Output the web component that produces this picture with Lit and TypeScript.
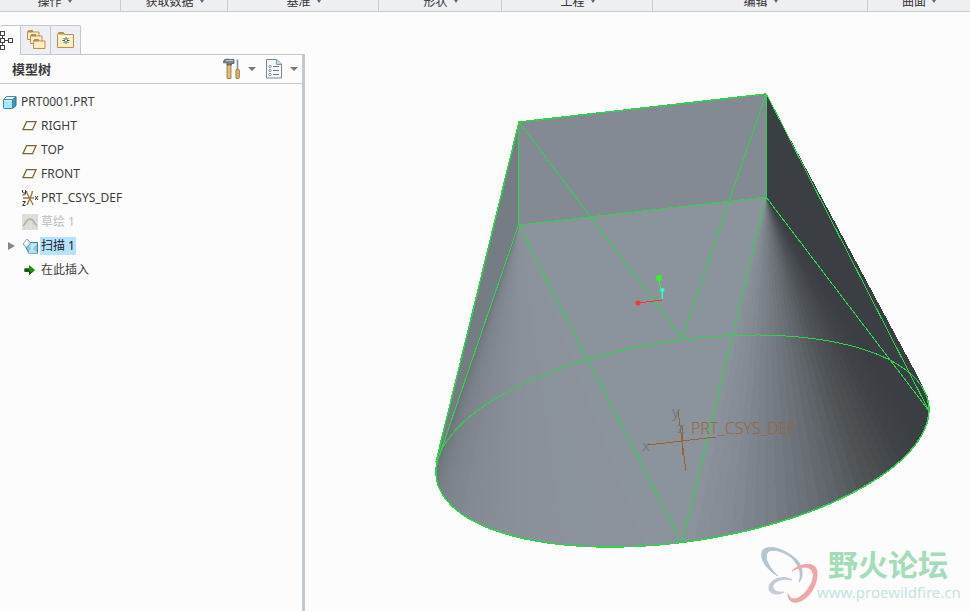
import { LitElement, html, svg, css } from "lit";
import { customElement } from "lit/decorators.js";

const UI = css`"Noto Sans", "Noto Sans CJK SC", sans-serif`;

/* ---------- icons ---------- */
const folder = (x: number, y: number) => svg`
  <path d="M${x + 0.5} ${y + 9.5}v-8l1-1h4l1 1.500h5.500v7.500z" fill="#ffecc0" stroke="#b8934f"/>
  <path d="M${x + 1} ${y + 1.5}h5" stroke="#b38a48" stroke-width="2"/>`;

const icons: Record<string, unknown> = {
  part: svg`<path d="M10.500 5.500l3.500-3v9l-3.500 3z" fill="#3f9cc0" stroke="#27647e"/>
    <path d="M1.500 5.500l3-3h9.500l-3.500 3z" fill="#e0f8ff" stroke="#4c8ba5"/>
    <rect x="1.500" y="5.500" width="9" height="9" rx="1" fill="#a6e8fb" stroke="#3687a4"/>
    <path d="M2.500 6.500h7" stroke="#d7f7ff"/>`,
  plane: svg`<path d="M4.500 3.700h9.500l-3.500 8h-9.500z" fill="none" stroke="#7b6332" stroke-width="1.300"/>`,
  csys: svg`<path d="M1 8h11M4.500 1c.5 4 5 9.500 6.500 14M10.500 1c-.5 4-3.500 9-5.500 14" fill="none" stroke="#967a45" stroke-width="1.400"/>
    <path d="M.5 0v2l1 1h1.500M3.500 0v4l-1 1H.500M.5 11.500h3L.5 15.500h3M13 6l3 4M16 6l-3 4" fill="none" stroke="#333"/>`,
  sketch: svg`<rect width="16" height="16" fill="#dededd"/>
    <path d="M2 2h1M6 2h1M10 2h1M14 2h1M2 6h1M14 6h1M6 10h1M10 10h1M2 14h1M6 14h1M10 14h1M14 14h1" stroke="#c4c4c2"/>
    <path d="M1 12c3-2 3-7 7-7s4 5 7 7" fill="none" stroke="#b8b8a7" stroke-width="2"/>`,
  sweep: svg`<path d="M4 9.500L8 4.500h7.500v11H7z" fill="#86c8df" stroke="#3f849f"/>
    <path d="M8 5l7 .5-5 5z" fill="#c3e8f3"/><path d="M10 10.500l5 5H7z" fill="#b3e0ef"/>
    <path d="M15 5l-5 5.500 5 5M10 10.500l-3 4.500M10 10.500L6 6" fill="none" stroke="#e9f8fc" stroke-width=".8"/>
    <path d="M1 6l4-5 4 4-4.500 5z" fill="#c0e2ed" stroke="#6f93a2" stroke-width=".8"/>
    <path d="M2 5.500L5 2l1 4-2 2z" fill="#fff"/>`,
  insert: svg`<path d="M2.500 6.500H7V3l6 5-6 5V9.500H2.500z" fill="#0a9a0a"/>
    <path d="M2.500 9H8v2l5-2.800L7 13V9.800H2.500z" fill="#21420c"/>
    <path d="M2.500 6.500h4.500v3H2.500z" fill="#204f0c"/>`,
};

const icon = (name: string) =>
  html`<svg class="ico" width="17" height="16" viewBox="0 0 17 16" aria-hidden="true">${icons[name]}</svg>`;

/* ---------- ribbon ---------- */
const groups: [string, number][] = [
  ["操作", 121], ["获取数据", 107], ["基准", 151], ["形状", 123],
  ["工程", 151], ["编辑", 215], ["曲面", 102],
];

@customElement("ribbon-labels")
export class RibbonLabels extends LitElement {
  static styles = css`
    :host { display: flex; height: 11px; overflow: hidden; background: #eeeff2; border-bottom: 1px solid #c9cacc; }
    .group { flex-basis: 0; min-width: 0; display: flex; justify-content: center; align-items: flex-end; box-shadow: inset -1px 0 #c9cccf; }
    .group:last-child { box-shadow: none; }
    .group:first-child button { margin-right: 12px; }
    button { display: flex; align-items: center; gap: 6px; padding: 0; margin: 0 0 2px; border: 0; background: none; color: #333; font: 12px/16px "Noto Sans CJK SC", sans-serif; white-space: nowrap; }
    .caret { border: 2px solid transparent; border-top: 3px solid #666; border-bottom: 0; }
  `;
  render() {
    return groups.map(([name, w]) => html`<div class="group" style="flex-grow:${w}">
      <button>${name}<span class="caret"></span></button></div>`);
  }
}

/* ---------- model tree ---------- */
type Row = { text: string; icon: string; kind?: string; expand?: boolean };
const rows: Row[] = [
  { text: "RIGHT", icon: "plane" },
  { text: "TOP", icon: "plane" },
  { text: "FRONT", icon: "plane" },
  { text: "PRT_CSYS_DEF", icon: "csys" },
  { text: "草绘 1", icon: "sketch", kind: "hidden" },
  { text: "扫描 1", icon: "sweep", kind: "selected", expand: true },
  { text: "在此插入", icon: "insert" },
];

@customElement("model-tree")
export class ModelTree extends LitElement {
  static styles = css`
    :host { display: flex; flex-direction: column; font: 12px/18px ${UI}; color: #3c3c3c; }
    button { padding: 0; margin: 0; border: 0; background: none; display: flex; align-items: center; justify-content: center; }
    svg { display: block; flex: none; }
    .tabs { display: flex; height: 29px; padding-top: 13px; }
    .tab { width: 31px; margin-right: -1px; box-sizing: border-box; border: 1px solid #c3c7cc; border-bottom: 0; border-radius: 2px 2px 0 0; background: #eeeff2; }
    .tab.current { width: 21px; border-left: 0; background: #fcfcfc; justify-content: flex-start; position: relative; z-index: 1; margin-bottom: -1px; }
    .panel { flex: 1; border-top: 1px solid #c3c7cc; border-right: 3px solid #c3c8ce; }
    .head { display: flex; align-items: center; height: 28px; padding: 0 4px 0 12px; border-bottom: 1px solid #c3c7cc; }
    h2 { flex: 1; margin: 0; font: bold 13px/18px "Noto Sans CJK SC", sans-serif; color: #3c3c3c; }
    .drop { width: 8px; height: 20px; }
    .drop::before { content: ""; border: 4px solid transparent; border-top-color: #777; border-bottom: 0; }
    .tool { width: 20px; height: 24px; }
    .tool + .drop { margin: 0 8px 0 6px; }
    .tool + .drop:last-child { margin-right: 0; }
    ul { list-style: none; margin: 0; padding: 0; }
    .tree { padding: 6px 0 0 2px; }
    .row { display: flex; align-items: center; height: 24px; gap: 1px; }
    .root { gap: 0; }
    .root .name { padding-left: 2px; }
    .toggle { width: 19px; height: 16px; }
    .toggle::before { content: ""; }
    .open::before { border: 4px solid transparent; border-left: 7px solid #858585; border-right: 0; }
    .name { padding: 0 1px; }
    .hidden .name { color: #bdbdbd; }
    .selected .name { background: #b3e3ff; color: #222; }
  `;
  render() {
    return html`
      <div class="tabs" role="tablist">
        <button class="tab current" role="tab" aria-selected="true" aria-label="Model tree">
          <svg width="14" height="22" viewBox="0 0 14 22"><g fill="#fff" stroke="#444">
            <path d="M0 10.500h8M2.500 5v12" fill="none"/>
            <rect x=".5" y="1.500" width="4" height="4"/><rect x=".5" y="8.500" width="4" height="4"/><rect x=".5" y="15.500" width="4" height="4"/><rect x="8.500" y="8.500" width="4" height="4"/></g></svg>
        </button>
        <button class="tab" role="tab" aria-label="Folders">
          <svg width="20" height="20" viewBox="0 0 20 20">${folder(1, 0)}${folder(4, 4)}${folder(7, 9)}</svg>
        </button>
        <button class="tab" role="tab" aria-label="Favorites">
          <svg width="18" height="18" viewBox="0 0 18 18"><path d="M.5 16.500v-13l1-2h5l1 2h9v13z" fill="#ffeec3" stroke="#bb9049"/>
            <path d="M1.500 3.500v-2h5l1 2z" fill="#b98e49"/><path d="M2 5.500h14" stroke="#fffbe7"/>
            <path d="M9 6v7M5.500 9.500h7M6.500 7l5 5M11.500 7l-5 5" stroke="#1f657d"/><circle cx="9" cy="9.500" r="1" fill="#fff"/></svg>
        </button>
      </div>
      <div class="panel">
        <div class="head">
          <h2>模型树</h2>
          <button class="tool" aria-label="Settings">
            <svg width="18" height="22" viewBox="0 0 18 22"><path d="M4 5h4v15.500H4z" fill="#e5bb74" stroke="#966c30" stroke-width=".8"/>
              <path d="M1 2C3 .800 5 1 7.500 1.500h3.500v4H8.500V7H4V4.500L.5 5z" fill="#777f89" stroke="#555d67" stroke-width=".8"/>
              <path d="M3 2.700h7" stroke="#cdd3da"/><path d="M14.500 1.500V12" stroke="#848c96" stroke-width="1.600"/>
              <rect x="12.900" y="11.500" width="3.500" height="9" rx="1" fill="#dfb069" stroke="#966c30" stroke-width=".8"/></svg>
          </button>
          <button class="drop" aria-label="Settings menu"></button>
          <button class="tool" aria-label="Show">
            <svg width="18" height="22" viewBox="0 0 18 22"><path d="M1.500 1.500H12l4.500 4.500v14h-15z" fill="#f5f8fa" stroke="#7d868c"/>
              <path d="M11.500 1.500v5h5" fill="#c8dce6" stroke="#7d9aa8"/><path d="M8 8.500h6M8 12.500h6M8 16.500h6" stroke="#777"/>
              <g fill="#fff" stroke="#777" stroke-width=".8"><circle cx="5" cy="8.500" r="1.200"/><circle cx="5" cy="12.500" r="1.200"/><circle cx="5" cy="16.500" r="1.200"/></g></svg>
          </button>
          <button class="drop" aria-label="Show menu"></button>
        </div>
        <ul class="tree" role="tree">
          <li role="treeitem" aria-expanded="true">
            <div class="row root">${icon("part")}<span class="name">PRT0001.PRT</span></div>
            <ul role="group">${rows.map((r) => html`
              <li class=${r.kind ?? ""} role="treeitem"><div class="row">
                ${r.expand ? html`<button class="toggle open" aria-label="Expand"></button>` : html`<span class="toggle"></span>`}
                ${icon(r.icon)}<span class="name">${r.text}</span></div></li>`)}</ul>
          </li>
        </ul>
      </div>`;
  }
}

/* ---------- 3D model ---------- */
const PHI = -0.298;
const rim = (t: number): [number, number] => [682.5 + 246.5 * Math.cos(t), 441 + 106 * Math.sin(t + PHI)];
const pts = (list: [number, number][]) => list.map(([x, y]) => `${x.toFixed(1)},${y.toFixed(1)}`).join(" ");
const arc = (a: number, b: number, n = 60) =>
  Array.from({ length: n + 1 }, (_, i) => rim(a + ((b - a) * i) / n));

type Stop = [number, number, number, number];
function shade(stops: Stop[], k: number) {
  let i = 1;
  while (i < stops.length - 1 && stops[i][0] < k) i++;
  const a = stops[i - 1], b = stops[i];
  const f = (k - a[0]) / (b[0] - a[0]);
  return `rgb(${[1, 2, 3].map((c) => Math.round(a[c] + (b[c] - a[c]) * f)).join(",")})`;
}
function fan(apex: [number, number], from: number, to: number, n: number, stops: Stop[]) {
  return Array.from({ length: n }, (_, i) => {
    const a = from + ((to - from) * i) / n;
    const b = from + ((to - from) * Math.min(n, i + 1.3)) / n;
    return svg`<polygon points=${pts([apex, rim(a), rim((a + b) / 2), rim(b)])} fill=${shade(stops, (i + 0.5) / n)}/>`;
  });
}
const rightStops: Stop[] = [
  [0, 139, 147, 156], [0.12, 131, 138, 147], [0.27, 115, 122, 129], [0.38, 101, 107, 113],
  [0.53, 80, 84, 87], [0.7, 63, 66, 70], [0.82, 59, 62, 66], [1, 59, 62, 66],
];
const leftStops: Stop[] = [
  [0, 139, 147, 156], [0.4, 138, 145, 155], [0.65, 131, 138, 147], [0.85, 121, 128, 136], [1, 108, 115, 122],
];

@customElement("model-view")
export class ModelView extends LitElement {
  static styles = css`
    :host { display: block; min-width: 0; }
    svg { display: block; width: 100%; height: 100%; }
    .label { font: 300 16px "Open Sans", sans-serif; fill: #9a6330; }
    .axis { font: 15px "Open Sans", sans-serif; fill: #747880; }
    .brand { font: bold 30px "Noto Sans CJK SC", sans-serif; fill: #a3dcb8; }
    .site { font: 15px "Noto Sans", sans-serif; fill: #c3e3df; }
  `;
  render() {
    const H = Math.PI / 2;
    return html`<svg viewBox="305 12 665 599" role="img" aria-label="PRT0001">
      <g shape-rendering="crispEdges">
        <polygon points="519,122 436,462 440,475 470,430 519,225" fill="#757c84"/>
        <polygon points="766,94 917,375 928,397 929,411 766,197" fill="#3b3e42"/>
        ${fan([519, 225], H, Math.PI + 0.04, 32, leftStops)}
        ${fan([766, 197], H, 0, 32, rightStops)}
        <polygon points="519,122 766,94 766,197 519,225" fill="#838a94"/>
        <polygon points="519,225 766,197 682,543" fill="#8b939c"/>
        <g fill="none" stroke="#2fd24b">
          <polyline points=${pts(arc(-0.22, Math.PI + 0.1))} stroke-width="1.500"/>
          <polyline points=${pts(arc(Math.PI, 2 * Math.PI))}/>
          <path d="M436 462L519 122L766 94" stroke-width="1.500"/>
          <path d="M518.500 122v103L766.500 197V94L929 411L766 197L682 543L518.500 225L436 465M519 122L682 338L766 94"/>
        </g>
        <path d="M648 445L716 437M678 410l8 61" stroke="#9a6330" fill="none"/>
        <path d="M682.500 425v30" stroke="#9a6330" stroke-width="1.500"/>
        <path d="M638 303L662 300" stroke="#ff3434"/>
        <path d="M659 278L662 299" stroke="#35f52f"/>
        <path d="M662.500 290v9" stroke="#35efff"/>
      </g>
      <circle cx="638" cy="303" r="2.500" fill="#ff3434"/>
      <circle cx="659" cy="278" r="3" fill="#35f52f"/>
      <circle cx="662.500" cy="290" r="2" fill="#35efff"/>
      <text class="axis" x="672" y="417">y</text>
      <text class="axis" x="677" y="433">z</text>
      <text class="axis" x="642" y="451">x</text>
      <text class="label" x="691" y="434">PRT_CSYS_DEF</text>
      <g stroke-width="1" stroke-linejoin="round">
      <path fill="#b5c4d1" stroke="#b5c4d1" d="M778 576C764 568 759 556 763 550C771 543 789 552 797 560C804 568 803 578 799 582C803 572 797 563 791 557C781 550 770 548 767 553C764 559 770 569 778 576z"/>
      <path fill="#c3cbd4" stroke="#c3cbd4" d="M792 580C785 575 770 578 769 587C768 594 777 596 784 592C777 593 772 590 773 585C776 580 785 578 792 580z"/>
      <path fill="#f0a5a8" stroke="#f0a5a8" d="M792 571C800 563 816 561 817 572C818 584 809 600 797 602C791 603 788 599 788 594C790 600 795 600 800 597C808 592 815 579 813 573C811 565 800 566 792 571z"/>
      </g>
      <text class="brand" x="828" y="576">野火论坛</text>
      <text class="site" x="817" y="598">www.proewildfire.cn</text>
    </svg>`;
  }
}

@customElement("app-root")
export class AppRoot extends LitElement {
  static styles = css`
    :host { display: flex; flex-direction: column; height: 100vh; background: #fcfcfc; }
    main { flex: 1; min-height: 0; display: flex; }
    model-tree { flex: none; width: 305px; }
    model-view { flex: 1; }
  `;
  render() {
    return html`<ribbon-labels></ribbon-labels><main><model-tree></model-tree><model-view></model-view></main>`;
  }
}
